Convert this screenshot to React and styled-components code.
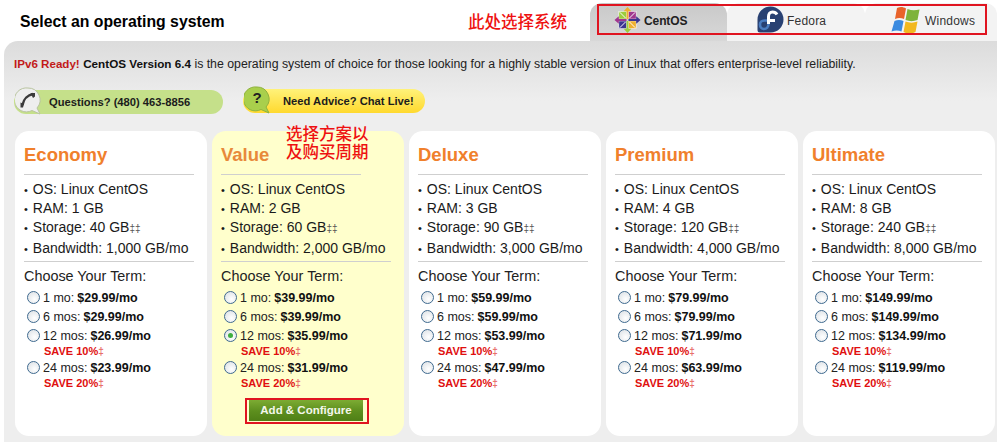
import React from "react";
import styled, { createGlobalStyle } from "styled-components";

const Global = createGlobalStyle`
  html, body { margin: 0; padding: 0; background: #fff; }
  body { font-family: "Liberation Sans", Arial, sans-serif; color: #111; }
  #root { width: 997px; height: 442px; overflow: hidden; }
  * { box-sizing: border-box; }
`;

const Page = styled.div`
  position: relative;
  width: 997px;
  height: 442px;
  overflow: hidden;
`;
const Header = styled.header`
  display: flex;
  height: 41px;
  padding-left: 20px;
`;
const Title = styled.h1`
  flex: 1;
  margin: 0;
  font-size: 15.8px;
  font-weight: bold;
  line-height: 43px;
  color: #000;
`;
const Tabs = styled.nav`
  display: grid;
  grid-template-columns: 137px 138px 132px;
  width: 407px;
  padding-top: 3px;
`;
const Tab = styled.div`
  display: flex;
  align-items: flex-start;
  padding: 3px 0 0 ${(p) => p.$pad}px;
  gap: ${(p) => p.$gap}px;
  font-size: 12px;
  font-weight: ${(p) => (p.$active ? "bold" : "normal")};
  letter-spacing: ${(p) => (p.$active ? "-0.1px" : "0.2px")};
  color: ${(p) => (p.$active ? "#222" : "#333")};
  background: ${(p) => (p.$active ? "linear-gradient(#c9c9c9,#d8d8d8)" : "#f3f3f3")};
  border-radius: 12px 12px 0 0;
  span { line-height: 30px; }
`;
const Panel = styled.main`
  margin-left: 4px;
  height: 401px;
  padding: 15px 2px 0 10px;
  border-radius: 14px 0 0 0;
  background: linear-gradient(#dcdcdc, #eeeeee 60px);
`;
const Intro = styled.p`
  margin: 0;
  font-size: 12.3px;
  line-height: 16px;
  color: #222;
  white-space: nowrap;
  b { font-size: 11.7px; color: #111; }
  em { font-size: 11.6px; font-style: normal; font-weight: bold; color: #c21a1a; }
`;
const Contacts = styled.div`
  display: flex;
  align-items: flex-start;
  gap: 20px;
  height: 29px;
  margin-top: 17px;
`;
const Pill = styled.div`
  position: relative;
  display: flex;
  align-items: center;
  width: ${(p) => p.$w}px;
  height: 24px;
  margin-top: ${(p) => p.$mt}px;
  padding-left: ${(p) => p.$pl}px;
  border-radius: 12px;
  font-size: 11.2px;
  font-weight: bold;
  color: #1c1c1c;
  white-space: nowrap;
  background: ${(p) => p.$bg};
`;
const Bubble = styled.svg`
  position: absolute;
  left: 1px;
  top: -3px;
`;
const Plans = styled.div`
  display: grid;
  grid-template-columns: repeat(5, 192px);
  gap: 5px;
  margin: 13px 0 0 1px;
`;
const Card = styled.section`
  position: relative;
  height: 305px;
  padding: 0 9px;
  border-radius: 14px;
  background: ${(p) => (p.$hl ? "#ffffcc" : "#fff")};
`;
const PlanName = styled.h2`
  margin: 0;
  height: 44px;
  padding-top: 12px;
  font-size: 18.5px;
  line-height: 24px;
  font-weight: bold;
  color: ${(p) => (p.$hl ? "#e8893a" : "#f0802c")};
  border-bottom: 1px solid #cfcfcf;
  margin-right: ${(p) => (p.$hl ? 34 : 4)}px;
`;
const Features = styled.ul`
  list-style: none;
  margin: 5px 4px 0 0;
  padding: 0 0 3px;
  border-bottom: 1px solid #cfcfcf;
`;
const Feature = styled.li`
  height: ${(p) => (p.$tall ? 21 : 19)}px;
  line-height: 19px;
  font-size: 14px;
  color: #1a1a1a;
  white-space: nowrap;
  small { font-size: 10px; color: #555; }
  &:before { content: "•"; margin-right: 5px; font-size: 11px; }
`;
const TermLabel = styled.div`
  margin-top: 6px;
  font-size: 14.4px;
  line-height: 17px;
  color: #222;
`;
const Terms = styled.div`
  margin-top: 3px;
  padding-left: 3px;
`;
const Term = styled.label`
  display: flex;
  align-items: center;
  gap: 3px;
  height: 19px;
  font-size: 12.5px;
  color: #222;
  white-space: nowrap;
  b { margin-left: 3px; color: #111; }
`;
const Radio = styled.span`
  position: relative;
  flex: none;
  width: 13px;
  height: 13px;
  border-radius: 50%;
  border: 1px solid #3f6a8f;
  background: radial-gradient(circle at 60% 65%, #fff, #d9dee3);
  ${(p) =>
    p.$on &&
    `&:after { content: ""; position: absolute; left: 3px; top: 3px; width: 5px; height: 5px; border-radius: 50%; background: #3fae3f; }`}
`;
const Save = styled.div`
  height: 13px;
  padding-left: 17px;
  font-size: 11px;
  line-height: 13px;
  font-weight: bold;
  color: #e00f0f;
  small { font-size: 10px; color: #e8706b; }
`;
const Button = styled.button`
  display: block;
  width: 114px;
  height: 22px;
  margin: 9px 0 0 28px;
  border: 0;
  padding: 0;
  font-family: inherit;
  font-size: 11.5px;
  font-weight: bold;
  color: #f4f7ec;
  background: linear-gradient(#7fae35, #5d8f1e 55%, #4f7f16);
`;
const Note = styled.div`
  position: absolute;
  left: ${(p) => p.$x}px;
  top: ${(p) => p.$y}px;
  color: #ee1111;
  font-family: "Noto Sans CJK SC", serif;
  font-size: 16.5px;
  line-height: 18px;
  font-weight: 500;
  text-align: center;
  white-space: nowrap;
`;
const Frame = styled.div`
  position: absolute;
  left: ${(p) => p.$x}px;
  top: ${(p) => p.$y}px;
  width: ${(p) => p.$w}px;
  height: ${(p) => p.$h}px;
  border: 2px solid #e01420;
  pointer-events: none;
`;

const CentOSIcon = () => (
  <svg width="27" height="28" viewBox="0 0 28 28" style={{ flex: "none" }}>
    <rect x="5" y="5" width="8" height="8" fill="#9ccd3e" stroke="#fff" strokeWidth=".6" />
    <rect x="15" y="5" width="8" height="8" fill="#a0368f" stroke="#fff" strokeWidth=".6" />
    <rect x="15" y="15" width="8" height="8" fill="#eeb02f" stroke="#fff" strokeWidth=".6" />
    <rect x="5" y="15" width="8" height="8" fill="#3c3590" stroke="#fff" strokeWidth=".6" />
    <path d="M6 6l6 6M22 6l-6 6M22 22l-6-6M6 22l6-6" stroke="#fff" strokeWidth="1" />
    <path d="M14 .5L18 5h-3v8h-2V5h-3z" fill="#eeb02f" />
    <path d="M27.500 14L23 18v-3h-8v-2h8v-3z" fill="#3c3590" />
    <path d="M14 27.500L10 23h3v-8h2v8h3z" fill="#9ccd3e" />
    <path d="M.5 14L5 10v3h8v2H5v3z" fill="#a0368f" />
  </svg>
);
const FedoraIcon = () => (
  <svg width="27" height="27" viewBox="0 0 27 27" style={{ flex: "none" }}>
    <path d="M13.500 .5a13 13 0 1 1 0 26H3a2.500 2.500 0 0 1-2.500-2.500V13.500a13 13 0 0 1 13-13z" fill="#294172" />
    <path d="M11.500 17v1c0 3-2 5-4.500 5S3 21 3 18.500 5 14.500 7.500 14.500H11.500" fill="none" stroke="#4a7cc0" strokeWidth="2.600" />
    <path d="M20 8.500C19 6.800 17 6 15.500 6 13 6 11.500 8 11.500 10.500V18M11.500 14.500H18" fill="none" stroke="#fff" strokeWidth="3" />
  </svg>
);
const WindowsIcon = () => (
  <svg width="31" height="29" viewBox="0 0 31 29" style={{ flex: "none" }}>
    <path d="M7 2c3-1.500 6-1.500 9 .5L14 13c-3-1.500-6-1.500-9 0z" fill="#e8632a" />
    <path d="M17.500 3c4 1.500 7.500 1.500 12 .5L27.500 14c-4 1.500-8 1.500-12 0z" fill="#7eb33a" />
    <path d="M4.500 15c3-1.500 6-1.500 9 0l-2 10.500c-3-1.500-6.500-1.500-10 0z" fill="#3b8be0" />
    <path d="M15.500 15.500c4 1.500 8 1.500 12 0l-2 10.500c-4 2-8 2-12 0z" fill="#f2b81f" />
  </svg>
);
const PhoneBubble = () => (
  <Bubble width="27" height="28" viewBox="0 0 27 28">
    <path d="M13 1a12 12 0 0 1 9 20l3 6-8-3.500A12 12 0 1 1 13 1z" fill="#eeeeee" stroke="#b9c4a0" />
    <path d="M18 7C13 8 8.500 12 7.500 18" fill="none" stroke="#3a3a3a" strokeWidth="2.400" />
    <path d="M15.500 6h4.500v3.500l-2 1.500zM5.500 15.500l3.500 1.500-1 3.500H5.500z" fill="#3a3a3a" />
  </Bubble>
);
const AskBubble = () => (
  <Bubble width="27" height="28" viewBox="0 0 27 28">
    <path d="M13 1a12 12 0 0 1 9 20l3 6-8-3.500A12 12 0 1 1 13 1z" fill="#a9cf4c" stroke="#8fb23c" />
    <text x="13" y="17" textAnchor="middle" fontFamily="Liberation Sans" fontWeight="bold" fontSize="15" fill="#222">?</text>
  </Bubble>
);

const plans = [
  { name: "Economy", ram: 1, st: 40, bw: "1,000", p: ["29.99", "29.99", "26.99", "23.99"] },
  { name: "Value", ram: 2, st: 60, bw: "2,000", p: ["39.99", "39.99", "35.99", "31.99"], hl: true },
  { name: "Deluxe", ram: 3, st: 90, bw: "3,000", p: ["59.99", "59.99", "53.99", "47.99"] },
  { name: "Premium", ram: 4, st: 120, bw: "4,000", p: ["79.99", "79.99", "71.99", "63.99"] },
  { name: "Ultimate", ram: 8, st: 240, bw: "8,000", p: ["149.99", "149.99", "134.99", "119.99"] },
];
const terms = ["1 mo:", "6 mos:", "12 mos:", "24 mos:"];

export default function App() {
  return (
    <Page>
      <Global />
      <Header>
        <Title>Select an operating system</Title>
        <Tabs>
          <Tab $active $pad={24} $gap={3}><CentOSIcon /><span>CentOS</span></Tab>
          <Tab $pad={30} $gap={3}><FedoraIcon /><span>Fedora</span></Tab>
          <Tab $pad={25} $gap={4}><WindowsIcon /><span>Windows</span></Tab>
        </Tabs>
      </Header>
      <Panel>
        <Intro>
          <em>IPv6 Ready!</em> <b>CentOS Version 6.4</b> is the operating system of choice for those looking for a highly stable version of Linux that offers enterprise-level reliability.
        </Intro>
        <Contacts>
          <Pill $w={209} $pl={35} $mt={1} $bg="#c5e08a"><PhoneBubble />Questions? (480) 463-8856</Pill>
          <Pill $w={182} $pl={40} $mt={0} $bg="linear-gradient(#fff27a,#ffd92e)"><AskBubble />Need Advice? Chat Live!</Pill>
        </Contacts>
        <Plans>
          {plans.map((pl) => (
            <Card key={pl.name} $hl={pl.hl}>
              <PlanName $hl={pl.hl}>{pl.name}</PlanName>
              <Features>
                <Feature>OS: Linux CentOS</Feature>
                <Feature>RAM: {pl.ram} GB</Feature>
                <Feature $tall>Storage: {pl.st} GB<small>‡‡</small></Feature>
                <Feature>Bandwidth: {pl.bw} GB/mo</Feature>
              </Features>
              <TermLabel>Choose Your Term:</TermLabel>
              <Terms>
                {terms.map((t, i) => (
                  <React.Fragment key={t}>
                    <Term>
                      <Radio $on={pl.hl && i === 2} />
                      <span>{t}<b>${pl.p[i]}/mo</b></span>
                    </Term>
                    {i >= 2 && <Save>SAVE {i === 2 ? 10 : 20}%<small>‡</small></Save>}
                  </React.Fragment>
                ))}
              </Terms>
              {pl.hl && <Button>Add &amp; Configure</Button>}
            </Card>
          ))}
        </Plans>
      </Panel>
      <Note $x={468} $y={12}>此处选择系统</Note>
      <Note $x={286} $y={124}>选择方案以<br />及购买周期</Note>
      <Frame $x={597} $y={4} $w={390} $h={31} />
      <Frame $x={245} $y={398} $w={124} $h={26} />
    </Page>
  );
}
